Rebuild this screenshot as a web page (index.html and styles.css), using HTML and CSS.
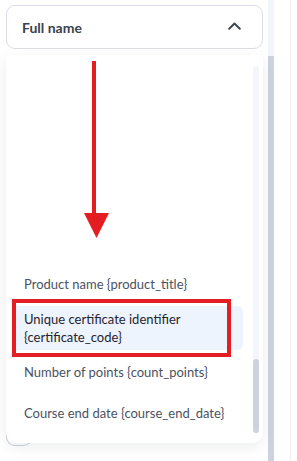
FILE: index.html
```html
<!DOCTYPE html>
<html lang="en">
<head>
  <meta charset="UTF-8" />
  <title>Certificate fields</title>
  <link rel="stylesheet" href="styles.css">
</head>
<body>
  <div class="layout">
    <div class="panel">
      <div class="select">
        <span class="select-label">Full name</span>
        <svg class="chevron" width="13" height="8" viewBox="0 0 13 8">
          <path d="M1.2 6.8 L6.5 1.5 L11.8 6.8" fill="none" stroke="#3f4654" stroke-width="2" stroke-linecap="round" stroke-linejoin="round"/>
        </svg>
      </div>

      <div class="dropdown">
        <ul class="options">
          <li class="option">Product name {product_title}</li>
          <li class="option active">Unique certificate identifier {certificate_code}</li>
          <li class="option">Number of points {count_points}</li>
          <li class="option last">Course end date {course_end_date}</li>
        </ul>
        <div class="track">
          <div class="thumb"></div>
        </div>
      </div>
      <div class="peek"></div>

      <!-- annotation -->
      <svg class="arrow" width="25" height="178" viewBox="0 0 25 178">
        <rect x="8" y="0" width="4" height="154" fill="#e41e20"/>
        <polygon points="0,152 25,152 12.5,177" fill="#e41e20"/>
      </svg>
      <div class="highlight-box"></div>
    </div>

    <div class="page-scroll">
      <div class="page-track"></div>
      <div class="page-thumb"></div>
    </div>
    <div class="page-edge"></div>
  </div>
</body>
</html>
```

FILE: styles.css
```css
* {
  margin: 0;
  padding: 0;
  box-sizing: border-box;
}

body {
  font-family: Lato, "Open Sans", Arial, sans-serif;
  background-color: #fff;
}

.layout {
  display: flex;
  height: 461px;
  overflow: hidden;
}

.panel {
  position: relative;
  width: 263px;
  padding: 5px 0 0 6px;
}

.select {
  display: flex;
  align-items: center;
  justify-content: space-between;
  height: 44px;
  padding: 0 21px 0 15px;
  border: 1px solid #dddde9;
  border-radius: 9px;
  background-color: #fff;
}

.select-label {
  font-size: 14px;
  font-weight: 700;
  color: #3b4250;
}

.chevron {
  display: block;
  margin-top: -2px;
}

.dropdown {
  position: relative;
  z-index: 1;
  display: flex;
  height: 388px;
  margin-top: 6px;
  padding: 0 4px 0 6px;
  background-color: #fff;
  border-radius: 4px 4px 10px 10px;
  box-shadow: 0 4px 14px rgba(15, 23, 42, 0.08);
}

.options {
  list-style: none;
  width: 231px;
  display: flex;
  flex-direction: column;
  justify-content: flex-end;
  gap: 9px;
  padding-bottom: 17px;
}

.option {
  padding: 4px 12px;
  font-size: 13px;
  line-height: 18px;
  color: #4b5261;
  border-radius: 6px;
}

.option.active {
  background-color: #eef4fd;
  color: #1e2430;
}

.option.last {
  margin-top: 6px;
}

.track {
  display: flex;
  flex-direction: column;
  justify-content: flex-end;
  width: 6px;
  margin: 11px 0 10px 10px;
  background-color: #f3f6fb;
  border-radius: 3px;
}

.thumb {
  height: 74px;
  background-color: #cbd3de;
  border-radius: 3px;
}

.peek {
  width: 26px;
  height: 14px;
  margin-top: -11px;
  border: 1px solid #cbd2dd;
  border-top: none;
  border-radius: 0 0 9px 9px;
}

.arrow {
  position: absolute;
  z-index: 2;
  left: 84px;
  top: 61px;
}

.highlight-box {
  position: absolute;
  z-index: 2;
  left: 12px;
  top: 299px;
  width: 219px;
  height: 58px;
  border: 4px solid #e31e24;
}

.page-scroll {
  display: flex;
  flex-direction: column;
  width: 6px;
  margin-left: 5px;
}

.page-track {
  height: 56px;
  background-color: #f2f5f9;
}

.page-thumb {
  flex: 1;
  background-color: #cbd3de;
}

.page-edge {
  width: 17px;
  border-right: 1px solid #efefef;
}
```
